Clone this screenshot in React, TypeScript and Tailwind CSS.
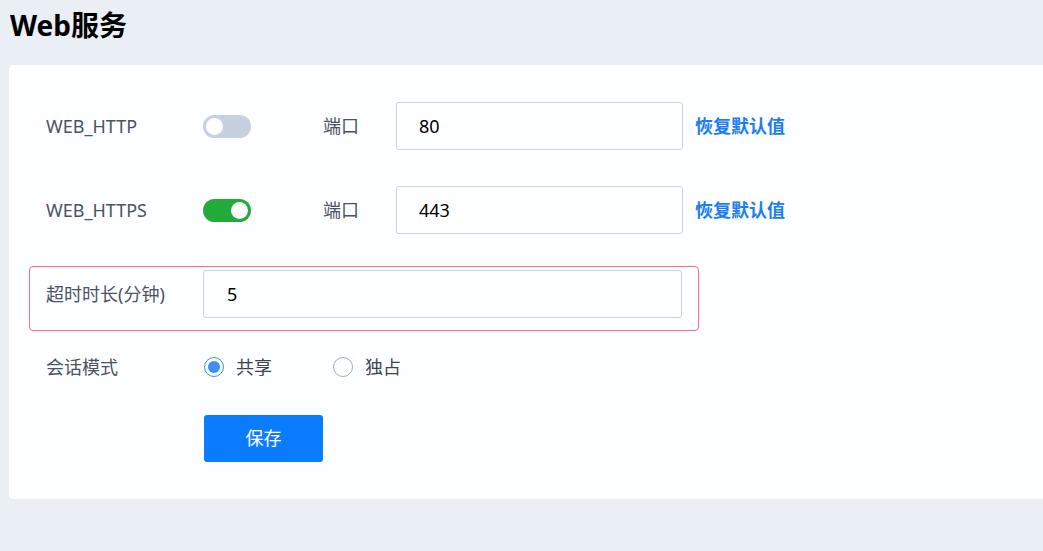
import { useState } from "react";

const font = { fontFamily: '"Noto Sans", "Noto Sans CJK SC", sans-serif' };

const Toggle = ({ on = false }) => (
  <div
    className={`w-[48px] h-[23px] rounded-full flex items-center px-[3px] ${
      on ? "bg-[#22aa3b] justify-end" : "bg-[#c6d0e0] justify-start"
    }`}
  >
    <div className="w-[17px] h-[17px] rounded-full bg-white" />
  </div>
);

const Radio = ({ checked = false, label = "" }) => (
  <label className="flex items-center gap-[12px] cursor-pointer">
    <span
      className={`w-[20px] h-[20px] rounded-full border flex items-center justify-center ${
        checked ? "border-[#3d8ff5]" : "border-[#a3abba]"
      }`}
    >
      {checked && <span className="w-[12px] h-[12px] rounded-full bg-[#3d8ff5]" />}
    </span>
    <span className="text-[#3d4351]">{label}</span>
  </label>
);

const PortRow = ({ name = "", on = false, port = "" }) => (
  <div className="flex items-center h-[48px] pl-[17px]">
    <div className="w-[157px] text-[#4b5263]">{name}</div>
    <Toggle on={on} />
    <div className="ml-[72px] w-[73px] text-[#4b5263]">端口</div>
    <input
      defaultValue={port}
      className="w-[287px] h-[48px] border border-[#c9d3e2] rounded-[3px] px-[22px] text-black outline-none"
    />
    <button className="ml-[12px] font-bold text-[#1a7df2]">恢复默认值</button>
  </div>
);

const App = () => {
  const [mode, setMode] = useState("share");

  return (
    <div className="min-h-screen bg-[#eaeef5] text-[18px]" style={font}>
      <h1 className="text-[28px] font-bold text-black px-[10px] pt-[5px] h-[65px] leading-[40px]">
        Web服务
      </h1>
      <div className="ml-[9px] bg-[#fdfeff] rounded-l-[4px] pl-[20px] pt-[37px] pb-[37px]">
        <PortRow name="WEB_HTTP" port="80" />
        <div className="h-[36px]" />
        <PortRow name="WEB_HTTPS" on port="443" />

        <div className="mt-[32px] w-[670px] border-[1.5px] border-[#f2737f] rounded-[4px] pl-[16px] pr-[16px] pt-[3px] pb-[12px] flex items-center">
          <div className="w-[157px] text-[#4b5263]">超时时长(分钟)</div>
          <input
            defaultValue="5"
            className="flex-1 h-[48px] border border-[#c9d3e2] rounded-[3px] px-[23px] text-black outline-none"
          />
        </div>

        <div className="mt-[24px] h-[24px] flex items-center pl-[17px]">
          <div className="w-[158px] text-[#4b5263]">会话模式</div>
          <div onClick={() => setMode("share")}>
            <Radio checked={mode === "share"} label="共享" />
          </div>
          <div className="ml-[61px]" onClick={() => setMode("own")}>
            <Radio checked={mode === "own"} label="独占" />
          </div>
        </div>

        <div className="mt-[36px] pl-[175px]">
          <button className="w-[119px] h-[47px] rounded-[3px] bg-[#0a7cff] text-white">
            保存
          </button>
        </div>
      </div>
    </div>
  );
};

export default App;
